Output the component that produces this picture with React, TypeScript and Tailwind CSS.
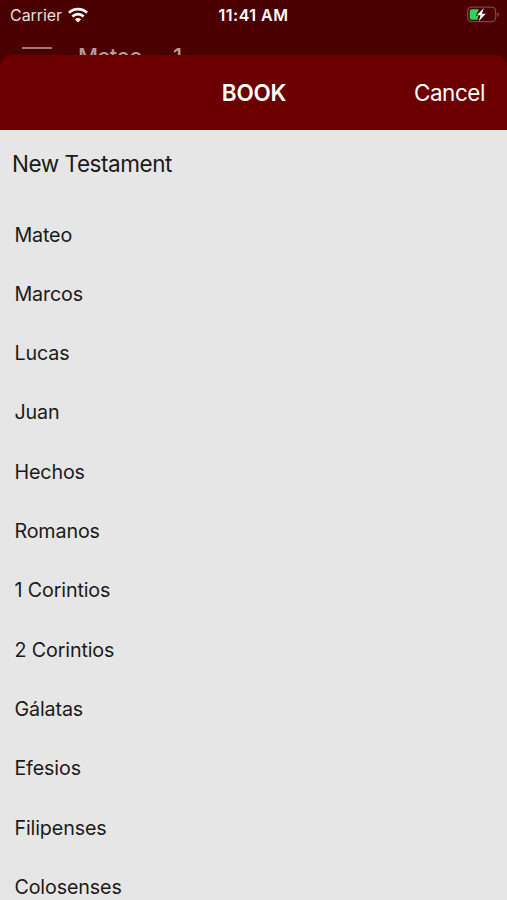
const books = [
  'Mateo',
  'Marcos',
  'Lucas',
  'Juan',
  'Hechos',
  'Romanos',
  '1 Corintios',
  '2 Corintios',
  'Gálatas',
  'Efesios',
  'Filipenses',
  'Colosenses',
];

function WifiIcon() {
  return (
    <svg width="20" height="16" viewBox="0 0 20 16" fill="none" stroke="#fff" strokeWidth="2.7">
      <path d="M1 5.8C6 1 14 1 19 5.8" />
      <path d="M4.4 9.4C7.6 6.4 12.4 6.4 15.6 9.4" />
      <path d="M10 15.4 6.9 12.2C8.7 10.6 11.3 10.6 13.1 12.2Z" fill="#fff" stroke="none" />
    </svg>
  );
}

function BatteryIcon() {
  return (
    <svg width="34" height="18" viewBox="0 0 34 18" fill="none">
      <rect x="1.6" y="1.1" width="28" height="14.6" rx="4.2" stroke="#7d4444" strokeWidth="1.3" />
      <path d="M31.2 6.1c2.2.8 2.2 4.2 0 5Z" fill="#7d4444" />
      <path d="M5.7 3.3H13L9.8 9.7H12.4L11.6 13.8H5.7Q3.7 13.8 3.7 11.8V5.3Q3.7 3.3 5.7 3.3Z" fill="#33d15a" />
      <path d="M17.8 2.1 10.8 9.3H14.6L12.8 15.3 19.8 7.8H15.9Z" fill="#fff" />
    </svg>
  );
}

function StatusBar() {
  return (
    <div className="grid h-[30px] grid-cols-3 items-center pr-[7px] pl-[10px] text-white">
      <div className="flex items-center gap-[6px]">
        <span className="text-[16px] tracking-[-0.05px] text-[#eadede]">Carrier</span>
        <WifiIcon />
      </div>
      <span className="-ml-[3px] text-center text-[16px] font-semibold tracking-[0.5px]">11:41 AM</span>
      <div className="flex justify-end">
        <BatteryIcon />
      </div>
    </div>
  );
}

export default function App() {
  return (
    <div className="flex h-[900px] w-full flex-col overflow-hidden bg-[#4a0000] font-['Inter',sans-serif]">
      <StatusBar />

      {/* Page underneath, mostly covered by the sheet */}
      <div className="flex h-[25px] shrink-0 items-start overflow-hidden pt-[17px] pl-[22px] text-[22px] leading-[24px] font-medium text-[#b79a9a]">
        <div className="h-[2px] w-[30px] bg-[#a07878]" />
        <span className="-mt-[3px] ml-[26px] w-[95px] tracking-[-0.4px]">Mateo</span>
        <span className="-mt-[3px]">1</span>
      </div>

      {/* Sheet */}
      <div className="flex min-h-0 flex-1 flex-col">
        <header className="grid h-[75px] shrink-0 grid-cols-3 items-center rounded-t-[13px] bg-[#6c0000] px-[22px] pt-px text-white">
          <span />
          <h1 className="pl-px text-center text-[22.5px] font-semibold tracking-[-0.2px]">BOOK</h1>
          <button className="text-right text-[22.5px] tracking-[-0.45px]">Cancel</button>
        </header>
        <div className="min-h-0 flex-1 overflow-hidden bg-[#e6e6e6] text-[#1a1a1a]">
          <h2 className="h-[75.7px] pt-[18px] pl-[12px] text-[22.5px] leading-[32px] tracking-[-0.45px]">
            New Testament
          </h2>
          <ul>
            {books.map((book) => (
              <li
                key={book}
                className="flex h-[59.3px] items-center pl-[14.4px] text-[19.7px] tracking-[-0.12px]"
              >
                {book}
              </li>
            ))}
          </ul>
        </div>
      </div>
    </div>
  );
}
